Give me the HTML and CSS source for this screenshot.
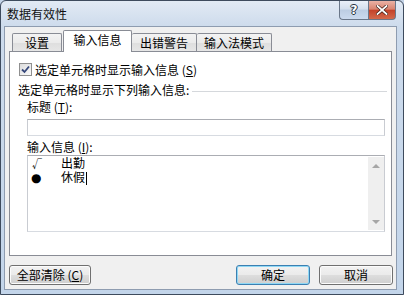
FILE: index.html
```html
<!DOCTYPE html>
<html lang="zh-CN">
<head>
<meta charset="utf-8">
<title>数据有效性</title>
<link rel="stylesheet" href="styles.css">
</head>
<body>
<div class="window">
  <div class="titlebar">
    <span class="title">数据有效性</span>
    <div class="caption-buttons">
      <div class="cap-btn help">?</div>
      <div class="cap-btn close">
        <svg width="12" height="10" viewBox="0 0 12 10"><path d="M1.5 1 L10.5 9 M10.5 1 L1.5 9" stroke="#3a1a12" stroke-width="3.2" stroke-linecap="square"/><path d="M1.5 1 L10.5 9 M10.5 1 L1.5 9" stroke="#fff" stroke-width="1.8" stroke-linecap="square"/></svg>
      </div>
    </div>
  </div>
  <div class="client">
    <div class="tabs">
      <div class="tab tab-1">设置</div>
      <div class="tab tab-2 active">输入信息</div>
      <div class="tab tab-3">出错警告</div>
      <div class="tab tab-4">输入法模式</div>
    </div>
    <div class="panel">
      <div class="check-row">
        <span class="checkbox"><svg width="11" height="11" viewBox="0 0 11 11"><path d="M2 5.5 L4.5 8 L9 2.5" fill="none" stroke="#35477a" stroke-width="1.8"/></svg></span>
        <span>选定单元格时显示输入信息 (<u>S</u>)</span>
      </div>
      <div class="group-label"><span>选定单元格时显示下列输入信息:</span><span class="rule"></span></div>
      <div class="field-label">标题 (<u>T</u>):</div>
      <div class="input"></div>
      <div class="field-label">输入信息 (<u>I</u>):</div>
      <div class="textarea">
        <div class="ta-content">
          <div class="ta-line"><span class="sym check-sym">√</span><span class="ta-text">出勤</span></div>
          <div class="ta-line"><span class="sym dot-sym">●</span><span class="ta-text">休假</span><span class="caret"></span></div>
        </div>
        <div class="scrollbar">
          <div class="sb-btn"><span class="arrow-up"></span></div>
          <div class="sb-btn"><span class="arrow-down"></span></div>
        </div>
      </div>
    </div>
    <div class="buttons">
      <div class="btn btn-wide">全部清除 (<u>C</u>)</div>
      <div class="spacer"></div>
      <div class="btn default">确定</div>
      <div class="btn">取消</div>
    </div>
  </div>
</div>
</body>
</html>
```

FILE: styles.css
```css
* { box-sizing: border-box; }
html, body { margin: 0; padding: 0; }
body {
  width: 404px;
  height: 295px;
  overflow: hidden;
  font-family: "Noto Sans CJK SC", "Noto Sans", sans-serif;
  font-size: 12px;
  color: #000;
  background: #c4d4e8;
}
u { text-decoration: underline; text-underline-offset: 1px; }

.window {
  width: 404px;
  height: 295px;
  border: 1px solid #3e4b5d;
  border-radius: 6px 6px 0 0;
  background: linear-gradient(#e2eaf4, #cddbec 26px, #c3d5ea);
  padding: 0 6px 4px 3px;
  display: flex;
  flex-direction: column;
}

.titlebar {
  height: 25px;
  display: flex;
  align-items: center;
}
.title {
  margin-left: 3px;
  line-height: 14px;
  color: #111;
}
.caption-buttons {
  margin-left: auto;
  margin-right: 1px;
  align-self: flex-start;
  display: flex;
}
.cap-btn {
  height: 19px;
  display: flex;
  align-items: center;
  justify-content: center;
  border: 1px solid #6a7789;
  border-top: none;
}
.help {
  width: 29px;
  border-right: none;
  border-radius: 0 0 0 4px;
  background: linear-gradient(#eaf0f8, #d4dfed 45%, #bccde2 50%, #cbdaee);
  color: #fff;
  font-family: "DejaVu Sans", sans-serif;
  font-weight: bold;
  font-size: 12px;
  text-shadow: 0 0 1px #2a3342, 1px 0 0 #2a3342, -1px 0 0 #2a3342, 0 1px 0 #2a3342, 0 -1px 0 #2a3342;
}
.close {
  width: 28px;
  border-radius: 0 0 4px 0;
  background: linear-gradient(#eab2a5, #d98470 45%, #c4432a 52%, #d36a4c);
}

.client {
  flex: 1;
  background: #f0f0f0;
  border: 1px solid #8e9cb0;
  padding: 0 4px 4px 4px;
  display: flex;
  flex-direction: column;
}

.tabs {
  margin-top: 3px;
  margin-left: 3px;
  height: 21px;
  display: flex;
  align-items: flex-end;
}
.tab {
  height: 18px;
  border: 1px solid #898c95;
  border-bottom: none;
  background: linear-gradient(#f3f3f3, #ebebeb 50%, #dedede 51%, #e6e6e6);
  display: flex;
  align-items: center;
  justify-content: center;
  line-height: 14px;
  border-radius: 2px 2px 0 0;
}
.tab-1 { width: 50px; }
.tab-2 { width: 69px; }
.tab-3 { width: 65px; border-left: none; }
.tab-4 { width: 75px; border-left: none; }
.tab.active {
  height: 22px;
  margin-bottom: -1px;
  position: relative;
  z-index: 1;
  background: #fff;
  padding-bottom: 3px;
  margin-left: 1px;
}

.panel {
  height: 205px;
  border: 1px solid #898c95;
  background: #fff;
  display: flex;
  flex-direction: column;
}

.check-row {
  margin-top: 11px;
  margin-left: 9px;
  height: 13px;
  display: flex;
  align-items: center;
  line-height: 14px;
}
.checkbox {
  width: 13px;
  height: 13px;
  border: 1px solid #8f8f8f;
  background: linear-gradient(135deg, #dcdcdc, #fafafa);
  display: flex;
  align-items: center;
  justify-content: center;
  margin-right: 3px;
}
.checkbox svg { display: block; }

.group-label {
  margin-top: 7px;
  padding-left: 8px;
  margin-right: 4px;
  line-height: 14px;
  display: flex;
}
.rule {
  flex: 1;
  height: 0;
  margin-top: 8px;
  margin-left: 3px;
  border-top: 1px solid #d5d8dc;
}

.field-label {
  margin-top: 3px;
  padding-left: 17px;
  line-height: 14px;
}
.input {
  margin: 5px 6px 0 17px;
  height: 17px;
  border: 1px solid #abadb3;
  border-color: #abadb3 #c9ccd2 #d7dbe1 #c9ccd2;
}
.input + .field-label { margin-top: 4px; }

.textarea {
  margin: 1px 6px 0 17px;
  height: 77px;
  border: 1px solid #abadb3;
  border-color: #abadb3 #c9ccd2 #d7dbe1 #c9ccd2;
  display: flex;
}
.ta-content {
  flex: 1;
  padding: 1px 0 0 3px;
}
.ta-line {
  display: flex;
  align-items: center;
  height: 14px;
  line-height: 14px;
  font-family: "Liberation Sans", "Noto Sans CJK SC", sans-serif;
}
.ta-text { font-size: 12px; }
.sym {
  width: 30px;
  font-size: 12px;
}
.check-sym {
  font-family: "Noto Sans CJK SC", sans-serif;
  font-size: 10px;
  line-height: 12px;
  padding-left: 1px;
}
.dot-sym {
  font-family: "DejaVu Sans", sans-serif;
  font-size: 12px;
  line-height: 14px;
}
.caret {
  width: 1px;
  height: 13px;
  background: #000;
  margin-left: 1px;
}
.scrollbar {
  width: 16px;
  margin: 1px 0 1px 0;
  background: #efefef;
  display: flex;
  flex-direction: column;
  justify-content: space-between;
}
.sb-btn {
  height: 17px;
  display: flex;
  align-items: center;
  justify-content: center;
}
.arrow-up, .arrow-down {
  width: 0;
  height: 0;
  border-left: 4px solid transparent;
  border-right: 4px solid transparent;
}
.arrow-up { border-bottom: 4px solid #a6a6a6; }
.arrow-down { border-top: 4px solid #a6a6a6; }

.buttons {
  margin-top: 9px;
  margin-right: -1px;
  height: 20px;
  display: flex;
  gap: 9px;
}
.spacer { flex: 1; }
.btn {
  width: 74px;
  height: 20px;
  border: 1px solid #707070;
  border-radius: 3px;
  background: linear-gradient(#f2f2f2, #ebebeb 48%, #dddddd 52%, #cfcfcf);
  box-shadow: inset 0 0 0 1px #fcfcfc;
  display: flex;
  align-items: center;
  justify-content: center;
  line-height: 14px;
}
.btn-wide { width: 82px; }
.btn.default {
  border-color: #3c7fb1;
  box-shadow: inset 0 0 0 1px #8fd8f5;
}
```
